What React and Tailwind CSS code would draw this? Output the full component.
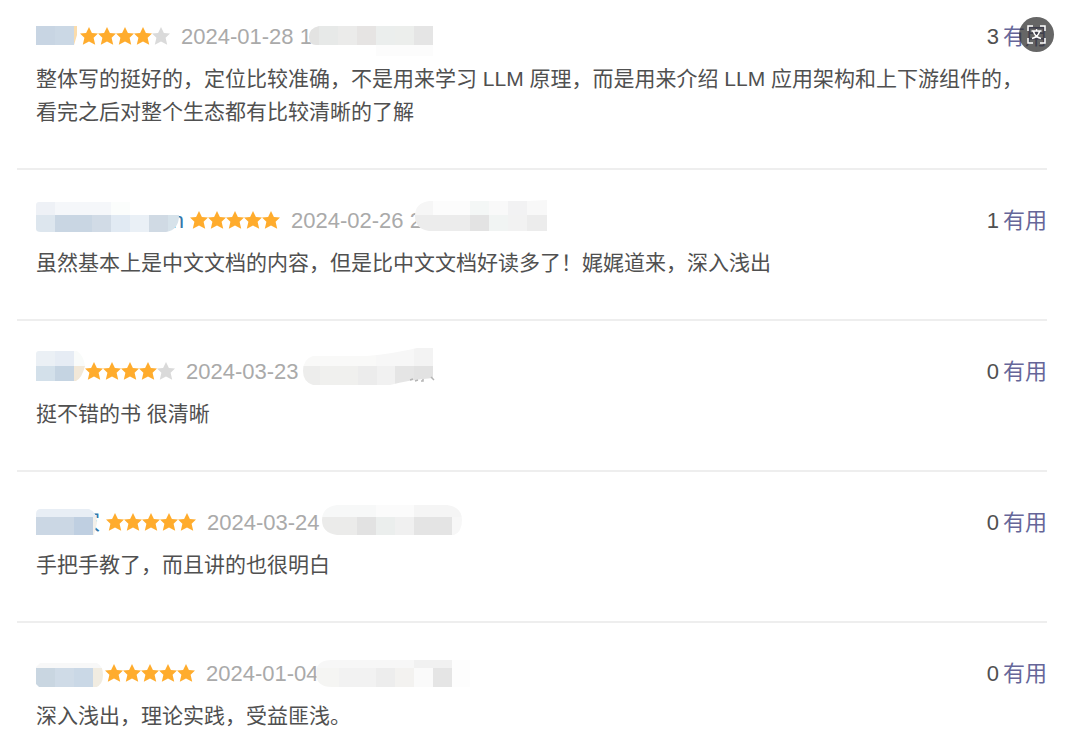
import React from "react";

// Each tile is [x, y, width, height, color] inside the 540x40 header strip
const reviews = [
  {
    id: 1,
    name: "",
    nameWidth: "w-[38px]",
    rating: 4,
    date: "2024-01-28 1",
    votes: 3,
    content:
      "整体写的挺好的，定位比较准确，不是用来学习 LLM 原理，而是用来介绍 LLM 应用架构和上下游组件的，看完之后对整个生态都有比较清晰的了解",
    shape:
      "M0 10h41v9l-3 10H0z M283 10h114v30h-57v-11h-60q-7 0-7-8q0-9 10-11z",
    tiles: [
      [0, 10, 19, 19, "#c8d5e3"],
      [19, 10, 19, 19, "#cbd8e5"],
      [38, 10, 4, 19, "#fbdcab"],
      [273, 10, 10, 19, "#e3e3e2"],
      [283, 10, 19, 19, "#e7e9e8"],
      [302, 10, 19, 19, "#ebebea"],
      [321, 10, 19, 19, "#e6e4e3"],
      [340, 10, 19, 19, "#ebeeed"],
      [359, 10, 19, 19, "#eceeec"],
      [378, 10, 19, 19, "#e5e5e5"],
      [340, 29, 57, 11, "#fcfcfc"],
    ],
  },
  {
    id: 2,
    name: "n",
    nameWidth: "w-[148px]",
    rating: 5,
    date: "2024-02-26 2",
    votes: 1,
    content: "虽然基本上是中文文档的内容，但是比中文文档好读多了！娓娓道来，深入浅出",
    shape:
      "M3 2h91v13h49q0 15-13 17H5q-5 0-5-3V5q0-3 3-3z M393 1l100 0 18-1v31H393q-14-2-14-15 0-13 14-15z",
    tiles: [
      [0, 2, 19, 13, "#eef1f6"],
      [19, 2, 56, 13, "#f5f7fa"],
      [75, 2, 19, 13, "#fbfdfc"],
      [0, 15, 19, 17, "#dde6ee"],
      [19, 15, 37, 17, "#c9d6e3"],
      [56, 15, 19, 17, "#d1dbe6"],
      [75, 15, 19, 17, "#e1eaf3"],
      [94, 15, 19, 17, "#eaf0f6"],
      [113, 15, 19, 17, "#d0dae4"],
      [132, 15, 12, 17, "#d6e2ea"],
      [379, 0, 18, 15, "#f6f6f6"],
      [397, 0, 37, 15, "#fcfcfc"],
      [434, 0, 19, 15, "#f4f7f6"],
      [453, 0, 19, 15, "#f9f9f9"],
      [472, 0, 19, 15, "#f2f2f3"],
      [491, 0, 20, 15, "#f8f8f8"],
      [379, 15, 55, 16, "#ececec"],
      [434, 15, 19, 16, "#e3e3e3"],
      [453, 15, 19, 16, "#f1f4f3"],
      [472, 15, 19, 16, "#f2f2f2"],
      [491, 15, 20, 16, "#ececec"],
    ],
  },
  {
    id: 3,
    name: "",
    nameWidth: "w-[43px]",
    rating: 4,
    date: "2024-03-23",
    votes: 0,
    content: "挺不错的书 很清晰",
    shape:
      "M3 0h38q7 5 8 15-3 12-9 15H0V3q0-3 3-3z M277 5h54q30-3 50-8h16v30q-25 2-43 7h-77q-10-3-10-14 0-12 10-15z",
    tiles: [
      [0, 0, 19, 15, "#ebf0f5"],
      [19, 0, 19, 15, "#e6ecf4"],
      [38, 0, 11, 15, "#f9fbfa"],
      [0, 15, 19, 15, "#d3e0ea"],
      [19, 15, 19, 15, "#c5d4e2"],
      [38, 15, 11, 15, "#f2e8d8"],
      [267, 0, 73, 15, "#f9f9f8"],
      [340, -4, 38, 19, "#f7f7f7"],
      [378, -4, 19, 19, "#f3f3f3"],
      [267, 15, 17, 20, "#ededec"],
      [284, 15, 38, 20, "#f0f0ee"],
      [322, 15, 19, 20, "#ececec"],
      [341, 15, 18, 20, "#f1f1f1"],
      [359, 15, 19, 20, "#e5e5e5"],
      [378, 15, 19, 20, "#e2e2e2"],
    ],
    residue: { d: "M374 29l3-1M382 29l-3 1M387 28v2l-2 0M395 26l3 3", color: "#b5b5b5" },
  },
  {
    id: 4,
    name: "家",
    nameWidth: "w-[64px]",
    rating: 5,
    date: "2024-03-24",
    votes: 0,
    content: "手把手教了，而且讲的也很明白",
    shape:
      "M5 7h48q8 3 8 14l-3 12H0V12q0-5 5-5z M301 3h110q15 2 15 15 0 12-8 15H301q-15-2-15-15 0-13 15-15z",
    tiles: [
      [0, 7, 61, 8, "#e8eef5"],
      [0, 15, 38, 19, "#cbd7e4"],
      [38, 15, 19, 19, "#bfcfe1"],
      [57, 15, 5, 19, "#f3f0ea"],
      [286, 3, 54, 12, "#f7f8f8"],
      [340, 3, 38, 12, "#fbfbfb"],
      [378, 3, 48, 12, "#f5f5f5"],
      [286, 15, 35, 18, "#ebebea"],
      [321, 15, 19, 18, "#e2e2e2"],
      [340, 15, 19, 18, "#ebeeed"],
      [359, 15, 19, 18, "#f0f0f0"],
      [378, 15, 38, 18, "#e4e4e4"],
      [416, 15, 10, 18, "#f7f7f7"],
    ],
  },
  {
    id: 5,
    name: "",
    nameWidth: "w-[63px]",
    rating: 5,
    date: "2024-01-04",
    votes: 0,
    content: "深入浅出，理论实践，受益匪浅。",
    shape:
      "M4 10h57q6 3 6 12 0 10-8 13H4l-4-4V14z M296 7h138v27H296q-16 0-16-14 0-13 16-13z",
    tiles: [
      [0, 10, 67, 5, "#f8f8f8"],
      [0, 15, 19, 19, "#c9d6e1"],
      [19, 15, 19, 19, "#cfdbe7"],
      [38, 15, 19, 19, "#cad8e6"],
      [57, 15, 10, 19, "#f1ece1"],
      [280, 7, 98, 8, "#f7f7f7"],
      [378, 7, 38, 8, "#f1f1f1"],
      [280, 15, 23, 19, "#f5f5f3"],
      [303, 15, 37, 19, "#f2f2f2"],
      [340, 15, 19, 19, "#ededed"],
      [359, 15, 19, 19, "#f3f2f0"],
      [378, 15, 19, 19, "#fafafa"],
      [397, 15, 19, 19, "#e5e5e5"],
      [416, 7, 18, 27, "#fdfdfd"],
    ],
  },
];

const Stars = ({ rating }) => (
  <svg
    width="90"
    height="18"
    viewBox="0 0 90 18"
    role="img"
    aria-label={`${rating} / 5`}
    className="shrink-0"
  >
    {[0, 1, 2, 3, 4].map((i) => (
      <path
        key={i}
        transform={`translate(${i * 18} 0)`}
        d="M9 0 L11.9 5.9 L18 6.4 L13.6 10.8 L15.2 17.8 L9 14.6 L2.8 17.8 L4.4 10.8 L0 6.4 L6.1 5.9 Z"
        fill={i < rating ? "#ffac2d" : "#dadada"}
      />
    ))}
  </svg>
);

// Pixelated strip that hides the user name and the rest of the date line
const Mosaic = ({ id, shape, tiles, residue }) => (
  <svg
    width="540"
    height="40"
    viewBox="0 0 540 40"
    aria-hidden="true"
    className="pointer-events-none absolute top-0 left-0 overflow-visible"
  >
    <clipPath id={`mosaic-${id}`}>
      <path d={shape} />
    </clipPath>
    <g clipPath={`url(#mosaic-${id})`} shapeRendering="crispEdges">
      {tiles.map(([x, y, w, h, color], i) => (
        <rect key={i} x={x} y={y} width={w} height={h} fill={color} />
      ))}
    </g>
    {residue && <path d={residue.d} stroke={residue.color} strokeWidth="1.5" fill="none" />}
  </svg>
);

const Review = ({ review }) => (
  <li className="border-b-2 border-[#eeeeee] pt-[30px] pb-10 pl-[19px] first:pt-4 last:border-b-0 last:pb-0">
    <div className="relative flex h-10 items-center text-[22px]">
      <a
        href="#user"
        aria-label="用户"
        className={`${review.nameWidth} mr-1.5 shrink-0 text-right text-[#3377aa]`}
      >
        {review.name}
      </a>
      <Stars rating={review.rating} />
      <time className="ml-[11px] whitespace-nowrap text-[#aaaaaa]">{review.date}</time>
      <Mosaic
        id={review.id}
        shape={review.shape}
        tiles={review.tiles}
        residue={review.residue}
      />
      <div className="ml-auto flex gap-1 whitespace-nowrap">
        <span className="text-[#505050]">{review.votes}</span>
        <a href="#useful" className="text-[#666699]">
          有用
        </a>
      </div>
    </div>
    <p className="mt-1.5 pr-3 text-[21px] leading-[33px] text-[#505050]">{review.content}</p>
  </li>
);

const App = () => {
  return (
    <main
      lang="zh-CN"
      className="relative bg-white pr-[33px] pl-[17px] font-['Liberation_Sans','Noto_Sans_CJK_SC',sans-serif]"
    >
      <ul>
        {reviews.map((review) => (
          <Review key={review.id} review={review} />
        ))}
      </ul>

      <button
        type="button"
        aria-label="识别文字"
        className="absolute top-[17px] right-[26px] flex size-[35px] items-center justify-center rounded-full bg-[#333333]/75"
      >
        <svg width="19" height="19" viewBox="0 0 19 19" fill="none" stroke="#ffffff" strokeWidth="1.5">
          <path d="M1 6V1H6M13 1H18V6M18 13V18H13M6 18H1V13" />
          <path d="M4.5 6H14.5M9.5 4V6M6.5 6.5C7.5 10 10 12.5 14 13.5M12.5 6.5C11.5 10 9 12.5 5 13.5" />
        </svg>
      </button>
    </main>
  );
};

export default App;
